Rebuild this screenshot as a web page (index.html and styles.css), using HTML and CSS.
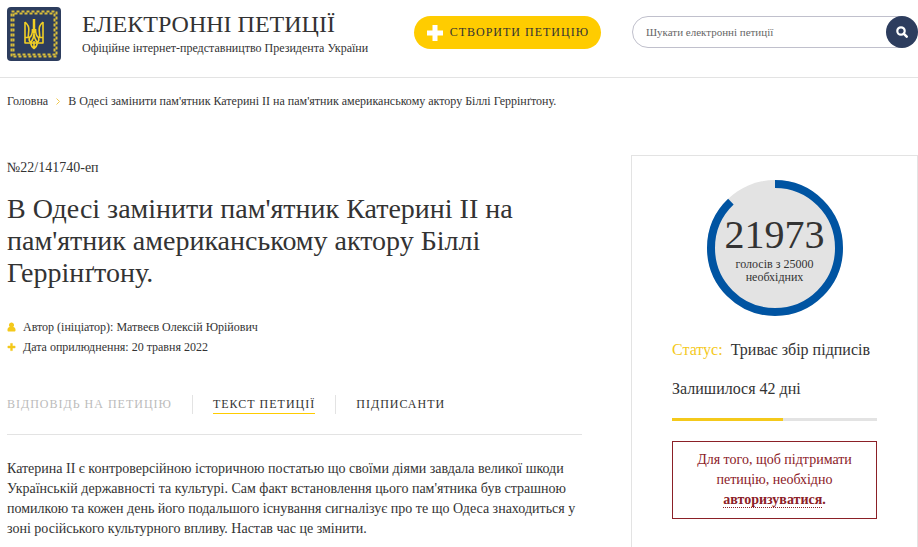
FILE: index.html
```html
<!DOCTYPE html>
<html lang="uk">
<head>
<meta charset="utf-8">
<meta name="viewport" content="width=device-width, initial-scale=1">
<title>Електронні петиції</title>
<link rel="stylesheet" href="styles.css">
</head>
<body>
<header class="header">
  <a class="brand" href="#">
    <svg class="emblem" viewBox="0 0 54 54" aria-hidden="true">
      <rect width="54" height="54" rx="4" fill="#2d3d5e"/>
      <rect x="4.500" y="4.500" width="45" height="45" fill="none" stroke="#d9bd3a" stroke-width="2" stroke-dasharray="3 2"/>
      <rect x="6.500" y="6.500" width="41" height="41" fill="none" stroke="#d9bd3a" stroke-width="2" stroke-dasharray="3 2" stroke-dashoffset="4"/>
      <g fill="none" stroke="#f2cf25" stroke-width="1.600" stroke-linejoin="round">
        <path d="M18 15v21h5.500M36 15v21h-5.500M18 15c3 2.500 4 5 3.800 8l-.6 7M36 15c-3 2.500-4 5-3.800 8l.6 7M18 30.500h5M36 30.500h-5"/>
        <path d="M27 13v14c0 4-1.500 6-3.500 9M27 27c0 4 1.500 6 3.500 9M25.500 22c0 4-.5 7-3 8.500-1 3 .5 5 2.500 5.500h4c2-.5 3.500-2.500 2.500-5.500-2.500-1.500-3-4.500-3-8.500M23.500 36c.5 2.500 1.500 4 3.500 5.500 2-1.500 3-3 3.500-5.500M27 34v7"/>
        <path d="M27 12v14" stroke-width="2.500"/>
      </g>
    </svg>
    <span class="brand-text">
      <span class="brand-title">ЕЛЕКТРОННІ ПЕТИЦІЇ</span>
      <span class="brand-sub">Офіційне інтернет-представництво Президента України</span>
    </span>
  </a>
  <button class="create" type="button">
    <svg class="plus" viewBox="0 0 16 16" aria-hidden="true"><path d="M5.500 0h5v5.500H16v5h-5.500V16h-5v-5.500H0v-5h5.500z" fill="#fff"/></svg>
    СТВОРИТИ ПЕТИЦІЮ
  </button>
  <form class="search" role="search">
    <input class="search-input" type="search" aria-label="Пошук" placeholder="Шукати електронні петиції">
    <button class="search-button" type="submit" aria-label="Шукати">
      <svg class="search-icon" viewBox="0 0 12 12" aria-hidden="true"><circle cx="5" cy="5" r="3.700" fill="none" stroke="#fff" stroke-width="2.200"/><path d="M7.700 7.700l3 3" stroke="#fff" stroke-width="2.500" stroke-linecap="round"/></svg>
    </button>
  </form>
</header>

<nav class="crumbs" aria-label="Навігація">
  <a href="#">Головна</a>
  <svg class="crumb-arrow" viewBox="0 0 4 7" aria-hidden="true"><path d="M.5.5l3 3-3 3" fill="none" stroke="#f0c850"/></svg>
  <span>В Одесі замінити пам'ятник Катерині II на пам'ятник американському актору Біллі Геррінґтону.</span>
</nav>

<main class="page">
  <article class="petition">
    <p class="number">№22/141740-еп</p>
    <h1 class="title">В Одесі замінити пам'ятник Катерині II на пам'ятник американському актору Біллі Геррінґтону.</h1>
    <ul class="meta">
      <li><svg class="meta-icon" viewBox="0 0 10 10" aria-hidden="true"><path d="M5 0a2.700 2.900 0 0 1 2 5c1.500.2 2.500 1.500 2.500 3.200C9.500 9.500 9 10 8 10H2C1 10 .5 9.500.5 8.200.5 6.500 1.500 5.200 3 5a2.700 2.900 0 0 1 2-5z" fill="#f4c91b"/></svg>Автор (ініціатор): Матвеєв Олексій Юрійович</li>
      <li><svg class="meta-icon" viewBox="0 0 10 10" aria-hidden="true"><path d="M4 1h2v3h3v2H6v3H4V6H1V4h3z" fill="#f4c91b" stroke="#f4c91b" stroke-width=".6"/></svg>Дата оприлюднення: 20 травня 2022</li>
    </ul>
    <nav class="tabs" aria-label="Розділи петиції">
      <span class="tab tab-off">ВІДПОВІДЬ НА ПЕТИЦІЮ</span>
      <span class="tab"><a class="tab-current" href="#text" aria-current="page">ТЕКСТ ПЕТИЦІЇ</a></span>
      <span class="tab"><a href="#signers">ПІДПИСАНТИ</a></span>
    </nav>
    <p class="text" id="text">Катерина II є контроверсійною історичною постатью що своїми діями завдала великої шкоди Українській державності та культурі. Сам факт встановлення цього пам'ятника був страшною помилкою та кожен день його подальшого існування сигналізує про те що Одеса знаходиться у зоні російського культурного впливу. Настав час це змінити.</p>
  </article>

  <aside class="card">
    <div class="votes">
      <svg class="ring" viewBox="0 0 136 136" aria-hidden="true">
        <circle cx="68" cy="68" r="68" fill="#e3e3e3"/>
        <circle cx="68" cy="68" r="64" fill="none" stroke="#0054a2" stroke-width="8" pathLength="25000" stroke-dasharray="21973 25000" transform="rotate(-90 68 68)"/>
      </svg>
      <div class="votes-text">
        <strong class="votes-count">21973</strong>
        <span class="votes-note">голосів з 25000 необхідних</span>
      </div>
    </div>
    <p class="status"><span class="status-label">Статус:</span> <span>Триває збір підписів</span></p>
    <p class="left">Залишилося 42 дні</p>
    <div class="bar"><div class="bar-fill" style="width:54%"></div></div>
    <p class="notice">Для того, щоб підтримати петицію, необхідно <b><a class="login" href="#">авторизуватися</a>.</b></p>
  </aside>
</main>
</body>
</html>
```

FILE: styles.css
```css
* { box-sizing: border-box; }

body {
  margin: 0;
  background: #fff;
  color: #333;
  font-family: Georgia, "Liberation Serif", serif;
  font-size: 12px;
}

a { color: inherit; text-decoration: none; }
p, h1, ul { margin: 0; padding: 0; font-weight: normal; }
ul { list-style: none; }
button, input { font-family: inherit; margin: 0; }

.header {
  display: grid;
  grid-template-columns: minmax(0, 1fr) auto minmax(0, 286px);
  column-gap: 31px;
  padding: 7px 0 16px 7px;
  border-bottom: 1px solid #e3e3e3;
}

.brand { display: flex; gap: 21px; }
.emblem { width: 54px; height: 54px; flex: none; }
.brand-text { display: flex; flex-direction: column; padding-top: 1px; white-space: nowrap; }
.brand-title { font-size: 24px; line-height: 32px; }
.brand-sub { font-size: 12px; line-height: 16px; }

.create {
  display: flex;
  align-items: center;
  gap: 7px;
  height: 33px;
  margin-top: 9px;
  padding: 0 12px 0 13px;
  border: 0;
  border-radius: 17px;
  background: #fc0;
  color: #333;
  font-size: 12px;
  letter-spacing: 1px;
  white-space: nowrap;
}
.plus { width: 16px; height: 16px; }

.search { display: flex; height: 32px; margin-top: 9px; }
.search-input {
  flex: 1;
  min-width: 0;
  margin-right: -16px;
  padding: 0 20px 0 13px;
  border: 1px solid #c0c0cc;
  border-radius: 16px 0 0 16px;
  background: #fff;
  font-size: 11px;
}
.search-input::placeholder { color: #666; opacity: 1; }
.search-button {
  display: flex;
  align-items: center;
  justify-content: center;
  z-index: 1;
  width: 32px;
  height: 32px;
  padding: 0;
  border: 0;
  border-radius: 50%;
  background: #2d3d5e;
}
.search-icon { width: 12px; height: 12px; }

.crumbs {
  display: flex;
  align-items: center;
  gap: 8px;
  padding: 15px 7px 0;
  line-height: 16px;
}
.crumb-arrow { width: 4px; height: 7px; }

.page {
  display: grid;
  grid-template-columns: minmax(0, 1fr) 287px;
  column-gap: 49px;
  padding: 46px 0 0 7px;
}

.number { padding-top: 5px; font-size: 14px; line-height: 16px; }
.title { margin-top: 17px; font-size: 28px; line-height: 32px; }
.meta { margin-top: 28px; line-height: 20px; }
.meta li { display: flex; align-items: center; gap: 7px; }
.meta-icon { width: 9px; height: 10px; }

.tabs {
  display: flex;
  margin-top: 38px;
  padding-bottom: 20px;
  border-bottom: 1px solid #e3e3e3;
  line-height: 18px;
  letter-spacing: 1px;
  white-space: nowrap;
}
.tab + .tab { margin-left: 20px; padding-left: 20px; border-left: 1px solid #e3e3e3; }
.tab-off { color: #bbb; }
.tab-current { display: block; border-bottom: 1px solid #fc0; }
.text { padding: 24px 0 8px; font-size: 14px; line-height: 20px; }

.card { padding: 24px 40px 28px; border: 1px solid #e3e3e3; font-size: 16px; }
.votes { display: grid; grid-template-columns: 136px; justify-content: center; }
.ring, .votes-text { grid-area: 1 / 1; }
.ring { display: block; width: 100%; }
.votes-text { padding: 32px 16px 0; text-align: center; }
.votes-count { display: block; font-size: 40px; font-weight: normal; line-height: 46px; }
.votes-note { display: block; font-size: 12px; line-height: 13px; }
.status { display: flex; gap: 8px; margin-top: 24px; line-height: 20px; white-space: nowrap; }
.left { margin-top: 19px; line-height: 20px; }
.status-label { color: #f4c91b; }
.bar { height: 3px; margin-top: 19px; background: #e3e3e3; }
.bar-fill { height: 3px; background: #f4c91b; }
.notice {
  margin-top: 20px;
  padding: 8px 16px;
  border: 1px solid #8b2027;
  color: #8b2027;
  font-size: 14px;
  line-height: 20px;
  text-align: center;
}
.login { border-bottom: 1px dotted #8b2027; }
```
